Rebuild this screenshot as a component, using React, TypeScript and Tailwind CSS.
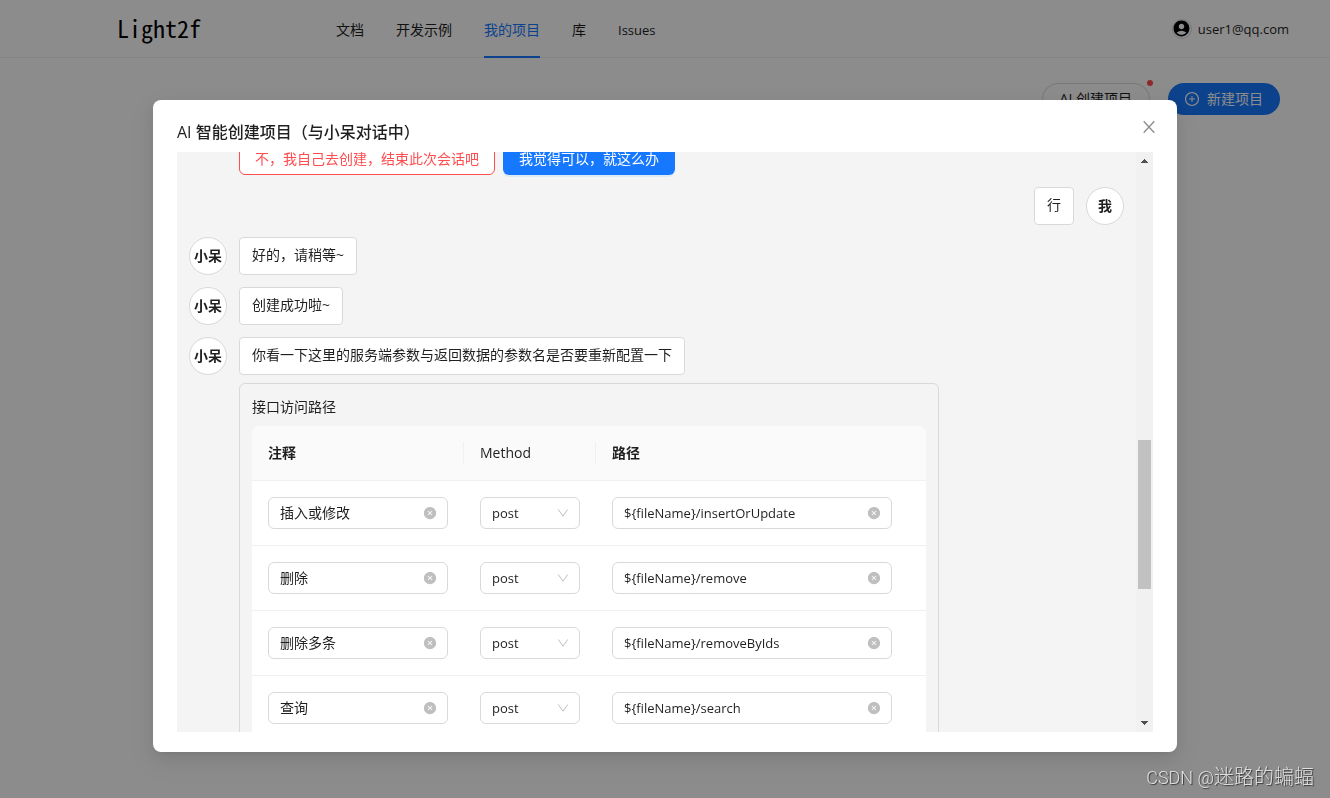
import { useState } from "react";
import { AiFillCloseCircle, AiOutlinePlusCircle } from "react-icons/ai";
import { MdAccountCircle } from "react-icons/md";

const navItems = ["文档", "开发示例", "我的项目", "库", "Issues"];

const initialRoutes = [
  { note: "插入或修改", method: "post", path: "${fileName}/insertOrUpdate" },
  { note: "删除", method: "post", path: "${fileName}/remove" },
  { note: "删除多条", method: "post", path: "${fileName}/removeByIds" },
  { note: "查询", method: "post", path: "${fileName}/search" },
];

function Header() {
  return (
    <header className="flex h-[58px] items-stretch border-b border-[#f0f0f0] bg-white pr-[41px] pl-[117px]">
      <div className="flex w-[219px] shrink-0 items-center pb-0.5 font-['Noto_Sans_CJK_SC',sans-serif] text-2xl leading-none text-black [font-feature-settings:'hwid']">
        Light2f
      </div>
      <nav className="flex gap-8">
        {navItems.map((item) => (
          <a
            key={item}
            href="#"
            className={
              item === "我的项目"
                ? "-mb-px flex items-center border-b-2 border-[#1677ff] pt-1 text-[#1677ff]"
                : item === "Issues"
                  ? "-mb-px flex items-center border-b-2 border-transparent pt-1 text-[13px]"
                  : "-mb-px flex items-center border-b-2 border-transparent pt-1"
            }
          >
            {item}
          </a>
        ))}
      </nav>
      <div className="ml-auto flex items-center gap-1.5">
        <span className="flex size-5 items-center justify-center rounded-full border border-[#d9d9d9]">
          <MdAccountCircle className="size-[19px] shrink-0 text-black" />
        </span>
        <span className="text-[13px]">user1@qq.com</span>
      </div>
    </header>
  );
}

function Avatar({ name }: { name: string }) {
  return (
    <span className="flex size-[38px] shrink-0 items-center justify-center rounded-full border border-[#d9d9d9] bg-white font-bold">
      {name}
    </span>
  );
}

function Message({ text, mine = false }: { text: string; mine?: boolean }) {
  return (
    <div className={mine ? "flex flex-row-reverse gap-3" : "flex gap-3"}>
      <Avatar name={mine ? "我" : "小呆"} />
      <p className="h-[38px] rounded border border-[#d9d9d9] bg-white px-3 leading-[34px]">{text}</p>
    </div>
  );
}

function ClearableInput({ label, initial, latin = false }: { label: string; initial: string; latin?: boolean }) {
  const [value, setValue] = useState(initial);
  return (
    <div className="flex h-8 items-center rounded-md border border-[#d9d9d9] bg-white pr-2.5 pl-[11px]">
      <input
        aria-label={label}
        className={
          latin
            ? "min-w-0 flex-1 bg-transparent text-[13px] outline-none"
            : "min-w-0 flex-1 bg-transparent outline-none"
        }
        value={value}
        onChange={(e) => setValue(e.target.value)}
      />
      <button type="button" aria-label={"清空" + label} className="text-[#bfbfbf]" onClick={() => setValue("")}>
        <AiFillCloseCircle className="size-3.5" />
      </button>
    </div>
  );
}

function MethodSelect({ initial }: { initial: string }) {
  return (
    <div className="grid h-8 items-center rounded-md border border-[#d9d9d9] bg-white">
      <select
        aria-label="Method"
        defaultValue={initial}
        className="col-start-1 row-start-1 h-full w-full appearance-none bg-transparent px-[11px] text-[13px] outline-none"
      >
        <option>post</option>
        <option>get</option>
        <option>put</option>
        <option>delete</option>
      </select>
      <svg
        viewBox="0 0 12 12"
        className="pointer-events-none col-start-1 row-start-1 mr-2.5 size-3 justify-self-end fill-none stroke-[#bfbfbf]"
        aria-hidden="true"
      >
        <path d="M1.2 2.4 6 9.2l4.8-6.8" />
      </svg>
    </div>
  );
}

function RouteTable() {
  return (
    <table className="mt-2 w-full table-fixed border-separate border-spacing-0 overflow-hidden rounded-t-lg bg-white">
      <colgroup>
        <col className="w-[212px]" />
        <col className="w-[132px]" />
        <col />
      </colgroup>
      <thead>
        <tr className="h-[55px] text-left">
          <th className="border-b border-[#f0f0f0] bg-[#fafafa] pl-4 font-semibold">
            <div className="border-r border-[#f0f0f0] leading-[22px]">注释</div>
          </th>
          <th className="border-b border-[#f0f0f0] bg-[#fafafa] pl-4 font-medium">
            <div className="border-r border-[#f0f0f0] leading-[22px]">Method</div>
          </th>
          <th className="border-b border-[#f0f0f0] bg-[#fafafa] pl-4 font-semibold">路径</th>
        </tr>
      </thead>
      <tbody>
        {initialRoutes.map((route) => (
          <tr key={route.path}>
            <td className="border-b border-[#f0f0f0] p-4">
              <ClearableInput label="注释" initial={route.note} />
            </td>
            <td className="border-b border-[#f0f0f0] p-4">
              <MethodSelect initial={route.method} />
            </td>
            <td className="border-b border-[#f0f0f0] py-4 pr-[34px] pl-4">
              <ClearableInput label="路径" initial={route.path} latin />
            </td>
          </tr>
        ))}
      </tbody>
    </table>
  );
}

function Scrollbar() {
  return (
    <div aria-hidden="true" className="flex w-[17px] shrink-0 flex-col items-center bg-[#f1f1f1] py-[7px]">
      <svg width="7" height="4" viewBox="0 0 7 4" className="fill-[#505050]" shapeRendering="crispEdges">
        <path d="M3 0h1v1h1v1h1v1h1v1H0V3h1V2h1V1h1z" />
      </svg>
      <span className="grow-[277]" />
      <span className="h-[149px] w-[13px] bg-[#c1c1c1]" />
      <span className="grow-[132]" />
      <svg width="7" height="4" viewBox="0 0 7 4" className="fill-[#505050]" shapeRendering="crispEdges">
        <path d="M0 0h7v1H6v1H5v1H4v1H3V3H2V2H1V1H0z" />
      </svg>
    </div>
  );
}

function ChatDialog() {
  return (
    <section
      role="dialog"
      aria-labelledby="chat-title"
      className="mx-auto w-full max-w-[1024px] rounded-lg bg-white px-6 py-5 shadow-[0_6px_16px_0_rgba(0,0,0,0.08),0_3px_6px_-4px_rgba(0,0,0,0.12),0_9px_28px_8px_rgba(0,0,0,0.05)]"
    >
      <div className="mb-2 flex h-6 items-center justify-between">
        <h2 id="chat-title" className="text-base font-medium">
          AI 智能创建项目（与小呆对话中）
        </h2>
        <button type="button" aria-label="关闭" className="-mr-1 pb-2.5 text-[#8c8c8c]">
          <svg viewBox="0 0 16 16" className="size-4 fill-none stroke-current" aria-hidden="true">
            <path strokeWidth="1.3" d="M2.7 2.2 13.3 13.8M13.3 2.2 2.7 13.8" />
          </svg>
        </button>
      </div>
      <div className="flex h-[calc(100vh-218px)] overflow-hidden bg-[#f4f4f4]">
        <div className="min-w-0 flex-1 overflow-hidden px-3">
          <div className="-mt-[9px] flex flex-col gap-3">
            <div className="flex gap-2 pl-[50px]">
              <button type="button" className="h-8 rounded-md border border-[#ff4d4f] bg-white px-[15px] text-[#ff4d4f]">
                不，我自己去创建，结束此次会话吧
              </button>
              <button
                type="button"
                className="h-8 rounded-md bg-[#1677ff] px-4 text-white shadow-[0_2px_0_rgba(5,145,255,0.1)]"
              >
                我觉得可以，就这么办
              </button>
            </div>
            <Message text="行" mine />
            <Message text="好的，请稍等~" />
            <Message text="创建成功啦~" />
            <div>
              <Message text="你看一下这里的服务端参数与返回数据的参数名是否要重新配置一下" />
              <div className="mt-2 ml-[50px] max-w-[700px] rounded-md border border-[#d9d9d9] p-3">
                <p>接口访问路径</p>
                <RouteTable />
              </div>
            </div>
          </div>
        </div>
        <Scrollbar />
      </div>
    </section>
  );
}

export default function App() {
  return (
    <div className="h-screen overflow-hidden bg-white font-['Open_Sans','Noto_Sans_CJK_SC',sans-serif] text-sm leading-[22px] text-[#1f1f1f]">
      <Header />
      <main className="flex justify-end gap-[18px] pt-[25px] pr-[50px]">
        <div className="relative">
          <button type="button" className="h-8 rounded-full border border-[#d9d9d9] bg-white px-[17px]">
            AI 创建项目
          </button>
          <span className="absolute -top-[3px] -right-[3px] size-1.5 rounded-full bg-[#ff4d4f]" />
        </div>
        <button type="button" className="flex h-8 items-center gap-[7px] rounded-full bg-[#1677ff] pr-[17px] pl-4 text-white">
          <AiOutlinePlusCircle className="size-4" />
          新建项目
        </button>
      </main>
      <div className="fixed inset-0 bg-black/45 pt-[100px]">
        <ChatDialog />
      </div>
      <div className="fixed right-4 bottom-1.5 font-['Roboto','Noto_Sans_CJK_SC',sans-serif] text-xl leading-7 font-light text-white/75 [text-shadow:1px_1px_1px_rgba(0,0,0,0.6)]">
        <span className="text-lg">CSDN @</span>迷路的蝙蝠
      </div>
    </div>
  );
}
